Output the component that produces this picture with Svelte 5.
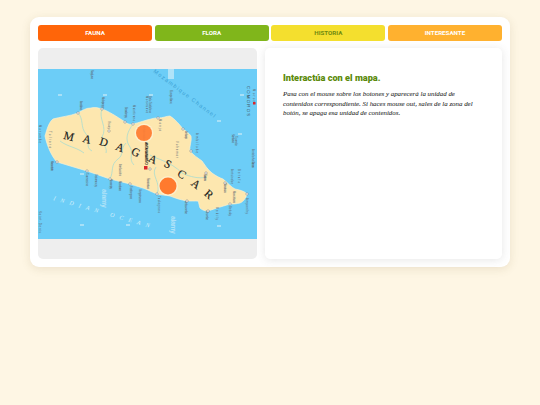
<script>
  const tabs = [
    { label: "FAUNA", cls: "fauna" },
    { label: "FLORA", cls: "flora" },
    { label: "HISTORIA", cls: "historia" },
    { label: "INTERESANTE", cls: "interesante" }
  ];

  // map coords are page pixels, the viewBox starts where the map starts
  const island =
    "M45 135 C47 128 49 121 53 118 C60 116 70 115 78 112 C83 109 86 107 91 107 C95 106 99 107 102 108 C108 110 116 115 125 121 C128 123 130 124 133 123 C138 122 146 119 151 118 C154 117 156 117 158 117 C163 117 167 115 170 115 C175 118 180 124 183 128 C186 130 189 132 191 135 C192 140 189 146 190 150 C193 154 198 157 202 160 C205 164 207 168 212 172 C216 175 220 177 223 178 C228 182 231 186 235 188 C240 189 244 190 247 193 C246 197 243 201 240 202 C236 203 233 203 230 203 C226 204 221 206 217 207 C214 208 211 209 208 210 C205 210 202 209 200 207 C199 204 199 202 198 200 C195 200 191 200 187 200 C181 199 175 197 170 195 C165 194 161 194 157 193 C152 191 150 190 148 189 C141 186 136 185 130 183 C123 181 117 180 110 178 C102 175 95 173 87 170 C77 167 67 164 57 161 C52 156 47 145 45 135 Z";

  const rivers = [
    "M78 112 C84 118 80 126 86 133 C92 140 84 146 92 150",
    "M102 108 C98 118 108 126 102 136 C100 142 108 146 106 152",
    "M133 123 C128 130 124 138 130 146 C134 152 128 158 134 164",
    "M150 154 C156 158 170 160 182 172 C190 176 200 178 206 176",
    "M110 178 C114 170 110 164 118 158 C124 154 120 148 126 142",
    "M60 140 C68 146 76 146 84 152",
    "M157 193 C162 182 150 174 156 166"
  ];

  const letters = [
    ["M", 69, 135, 14], ["A", 87, 138, 16], ["D", 104, 141, 18], ["A", 120, 146, 22], ["G", 136, 151, 24],
    ["A", 153, 158, 26], ["S", 168, 163, 30], ["C", 182, 173, 34], ["A", 196, 183, 38], ["R", 209, 193, 42]
  ];

  // town names, all vertical on the source map: name, x, top y, length
  const towns = [
    ["Nosy Lava", 92, 69, 9], ["Analalava", 81, 100, 9], ["Mahajanga", 103, 96, 11], ["Besalampy", 126, 106, 11],
    ["Maintirano", 134, 104, 16], ["Morondava", 147, 95, 17], ["Belo Tsiribihina", 150, 95, 17], ["Europa Island", 171, 89, 14],
    ["Manja", 160, 118, 12], ["Morombe", 40, 124, 18], ["Toliara", 50, 130, 17], ["Ihosy", 109, 120, 8],
    ["Ambanja", 186, 130, 8], ["Ambilobe", 197, 132, 20], ["Vohemar", 177, 140, 17], ["Sambava", 233, 133, 9],
    ["Tromelin", 236, 135, 10], ["Antalaha", 253, 148, 12], ["Maroantsetra", 52, 160, 10], ["Toamasina", 87, 172, 13],
    ["Vatomandry", 96, 173, 13], ["Mananjary", 111, 178, 10], ["Manakara", 120, 180, 10], ["Farafangana", 131, 185, 13],
    ["Vangaindrano", 140, 188, 14], ["Fianarantsoa", 148, 177, 11], ["Ambositra", 120, 163, 12], ["Saint-Denis", 40, 210, 22],
    ["Taolagnaro", 159, 195, 17], ["Ambovombe", 186, 200, 13], ["Tsihombe", 207, 209, 10], ["Bekily", 217, 206, 13],
    ["Betioky", 230, 205, 10], ["Ampanihy", 247, 197, 16], ["Antsirabe", 232, 168, 15], ["Betafo", 239, 168, 14],
    ["Miandrivazo", 225, 182, 10], ["Mandritsara", 234, 190, 12], ["Tsaratanana", 205, 173, 7], ["Glorieuses", 253, 160, 7]
  ];

  const dots = [
    [78, 112], [102, 108], [125, 121], [133, 123], [158, 117], [183, 128], [109, 130], [57, 161], [87, 170], [110, 178],
    [130, 183], [157, 193], [187, 200], [208, 210], [230, 203], [247, 193], [225, 182], [206, 172], [150, 168], [191, 150]
  ];

  // pale map specks
  const specks = [[58, 93], [103, 93], [149, 93], [217, 119], [240, 93], [238, 132], [80, 172], [80, 223], [126, 223], [217, 224]];
</script>

<div class="page">
  <main class="card">
    <nav class="tabs">
      {#each tabs as tab}
        <button class="tab {tab.cls}">{tab.label}</button>
      {/each}
    </nav>

    <div class="content">
      <section class="map-panel">
        <svg class="map" viewBox="38 68 219 170" width="219" height="170">
          <rect x="38" y="68" width="219" height="170" fill="#6ccdf7" />

          {#each specks as [x, y]}
            <rect {x} {y} width="4" height="2" fill="#a8e0f7" />
          {/each}
          <rect x="168" y="68" width="6" height="10" fill="#b0e3f8" />
          <text class="mark" transform="translate(102 188) rotate(90)" textLength="19">alamy</text>
          <text class="mark" transform="translate(171 215) rotate(90)" textLength="18">alamy</text>

          <text class="sea" transform="translate(153 71) rotate(37)" textLength="76">Mozambique Channel</text>
          <text class="ocean" transform="translate(53 199) rotate(16)" textLength="100">INDIAN OCEAN</text>
          <text class="label-dark" transform="translate(247 85) rotate(90)" textLength="30">COMOROS</text>

          <path d={island} fill="#fde7af" stroke="#f8f0d2" stroke-width="0.7" />
          {#each rivers as d}
            <path {d} fill="none" stroke="#a9dccf" stroke-width="0.8" />
          {/each}

          {#each towns as [name, x, y, len]}
            <text class="town" transform="translate({x - 1} {y}) rotate(90)" textLength={len}>{name}</text>
          {/each}

          <text class="town" transform="translate(253 88) rotate(90)" textLength="15">Moroni</text>
          <rect x="253" y="101" width="2.5" height="2.5" fill="#d8262c" />

          {#each dots as [x, y]}
            <circle cx={x} cy={y} r="1.2" fill="#fff" stroke="#555" stroke-width="0.4" />
          {/each}

          {#each letters as [ch, x, y, rot]}
            <text class="letter" transform="translate({x} {y}) rotate({rot})">{ch}</text>
          {/each}

          <text class="capital" transform="translate(145 141) rotate(90)" textLength="23">ANTANANARIVO</text>
          <rect x="144" y="165" width="3.5" height="3.5" fill="#d8262c" />

          <text class="town" transform="translate(143 125) rotate(90)" textLength="14">Ambatondrazaka</text>
          <circle cx="144" cy="132" r="9.5" fill="#fff" fill-opacity="0.35" />
          <circle cx="144" cy="132" r="8" fill="#ff7a2e" fill-opacity="0.92" />
          <circle cx="168" cy="185" r="10" fill="#fff" fill-opacity="0.35" />
          <circle cx="168" cy="185" r="8.5" fill="#ff7a2e" />
        </svg>
      </section>

      <section class="text-panel">
        <h2>Interactúa con el mapa.</h2>
        <p>Pasa con el mouse sobre los botones y aparecerá la unidad de contenidos correspondiente. Si haces mouse out, sales de la zona del botón, se apaga esa unidad de contenidos.</p>
      </section>
    </div>
  </main>
</div>

<style>
  :global(body) {
    background: #fef6e4;
  }

  .page {
    height: 405px;
    box-sizing: border-box;
    padding: 17px 30px 0;
    font-family: "Liberation Serif", serif;
  }

  .card {
    height: 250px;
    box-sizing: border-box;
    padding: 8px;
    background: #fff;
    border-radius: 9px;
    box-shadow: 0 2px 10px rgba(120, 100, 50, 0.14);
    display: flex;
    flex-direction: column;
    gap: 7px;
  }

  .tabs {
    display: grid;
    grid-template-columns: repeat(4, 1fr);
    gap: 2.5px;
  }

  .tab {
    height: 16px;
    padding: 0;
    border: 0;
    border-radius: 3px;
    font-family: Roboto, sans-serif;
    font-size: 6.2px;
    font-weight: 700;
    color: #fff;
  }

  .fauna {
    background: #ff6509;
  }
  .flora {
    background: #80b61b;
  }
  .historia {
    background: #f4df2e;
    color: #6f8a10;
  }
  .interesante {
    background: #ffb12f;
  }

  .content {
    flex: 1;
    display: flex;
    gap: 8px;
  }

  .map-panel {
    width: 219px;
    flex: none;
    background: #eeeeee;
    border-radius: 5px;
    display: flex;
    align-items: center;
    overflow: hidden;
  }

  .map {
    display: block;
  }

  .mark {
    font-family: "Liberation Sans", sans-serif;
    font-size: 7px;
    font-weight: 700;
    fill: #b0e3f8;
  }

  .sea {
    font-family: "Liberation Sans", sans-serif;
    font-size: 5.5px;
    fill: #3aa0d4;
  }

  .ocean {
    font-family: "Liberation Serif", serif;
    font-size: 6px;
    font-style: italic;
    fill: #d4f0fb;
  }

  .label-dark {
    font-family: "Liberation Sans", sans-serif;
    font-size: 4.2px;
    fill: #3b4a55;
  }

  .town {
    font-family: "Liberation Sans", sans-serif;
    font-size: 2.8px;
    fill: #5a6670;
  }

  .letter {
    font-family: "Liberation Serif", serif;
    font-size: 11.5px;
    fill: #1c1c1c;
    stroke: #1c1c1c;
    stroke-width: 0.15;
    text-anchor: middle;
    dominant-baseline: central;
  }

  .capital {
    font-family: "Liberation Sans", sans-serif;
    font-size: 3.4px;
    font-weight: 700;
    fill: #1c1c1c;
  }

  .text-panel {
    flex: 1;
    padding: 23px 18px 0;
    background: #fff;
    border-radius: 5px;
    box-shadow: 0 1px 8px rgba(80, 80, 80, 0.14);
  }

  h2 {
    margin: 0 0 4px;
    font-family: Roboto, sans-serif;
    font-size: 9.2px;
    font-weight: 900;
    line-height: 14px;
    color: #5b8a0a;
  }

  p {
    margin: 0;
    font-size: 6.9px;
    font-style: italic;
    line-height: 9.7px;
    color: #2a2a2a;
    -webkit-text-stroke: 0.06px #2a2a2a;
  }
</style>
